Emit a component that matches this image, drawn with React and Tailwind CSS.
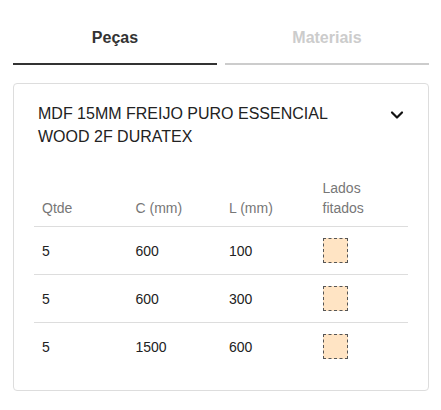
import React from 'react';

const rows = [
  { qtde: 5, c: 600, l: 100 },
  { qtde: 5, c: 600, l: 300 },
  { qtde: 5, c: 1500, l: 600 },
];

const Chevron = () => (
  <svg width="16" height="16" viewBox="0 0 16 16" className="flex-shrink-0">
    <path d="M3 5.5 L8 10.5 L13 5.5" fill="none" stroke="#111" strokeWidth="2.2" strokeLinecap="round" strokeLinejoin="round" />
  </svg>
);

const App = () => {
  return (
    <div className="min-h-screen bg-white" style={{ fontFamily: '"Liberation Sans", Arial, sans-serif' }}>
      <div className="ml-[13px] w-[416px]">
        {/* Tabs */}
        <div className="flex gap-2 pt-[26px]">
          <button className="flex-1 pb-[13px] border-b-2 border-[#333] text-base leading-6 font-bold text-[#333]">
            Peças
          </button>
          <button className="flex-1 pb-[13px] border-b-2 border-[#ccc] text-base leading-6 font-bold text-[#ccc]">
            Materiais
          </button>
        </div>

        {/* Card */}
        <div className="mt-[18px] border border-[#ddd] rounded px-5 pt-[18px] pb-[19px]">
          <div className="flex items-start justify-between pl-1 pr-[3px]">
            <h2 className="text-base leading-[23px] text-[#222] font-normal pr-10">
              MDF 15MM FREIJO PURO ESSENCIAL WOOD 2F DURATEX
            </h2>
            <div className="pt-[5px]">
              <Chevron />
            </div>
          </div>

          <table className="w-full mt-[22px] table-fixed border-collapse text-sm leading-5">
            <thead>
              <tr className="border-b border-[#ddd] text-[#777]">
                <th className="font-normal text-left align-bottom px-2 pt-2 pb-2">Qtde</th>
                <th className="font-normal text-left align-bottom px-2 pt-2 pb-2">C (mm)</th>
                <th className="font-normal text-left align-bottom px-2 pt-2 pb-2">L (mm)</th>
                <th className="font-normal text-left align-bottom px-2 pt-2 pb-2">
                  Lados
                  <br />
                  fitados
                </th>
              </tr>
            </thead>
            <tbody className="text-[#222]">
              {rows.map((r, i) => (
                <tr key={i} className={`h-12 ${i < rows.length - 1 ? 'border-b border-[#ddd]' : ''}`}>
                  <td className="px-2 align-middle">{r.qtde}</td>
                  <td className="px-2 align-middle">{r.c}</td>
                  <td className="px-2 align-middle">{r.l}</td>
                  <td className="px-2 align-middle">
                    <div className="w-[25px] h-[25px] bg-[#ffe4c4] border border-dashed border-[#555]" />
                  </td>
                </tr>
              ))}
            </tbody>
          </table>
        </div>
      </div>
    </div>
  );
};

export default App;
